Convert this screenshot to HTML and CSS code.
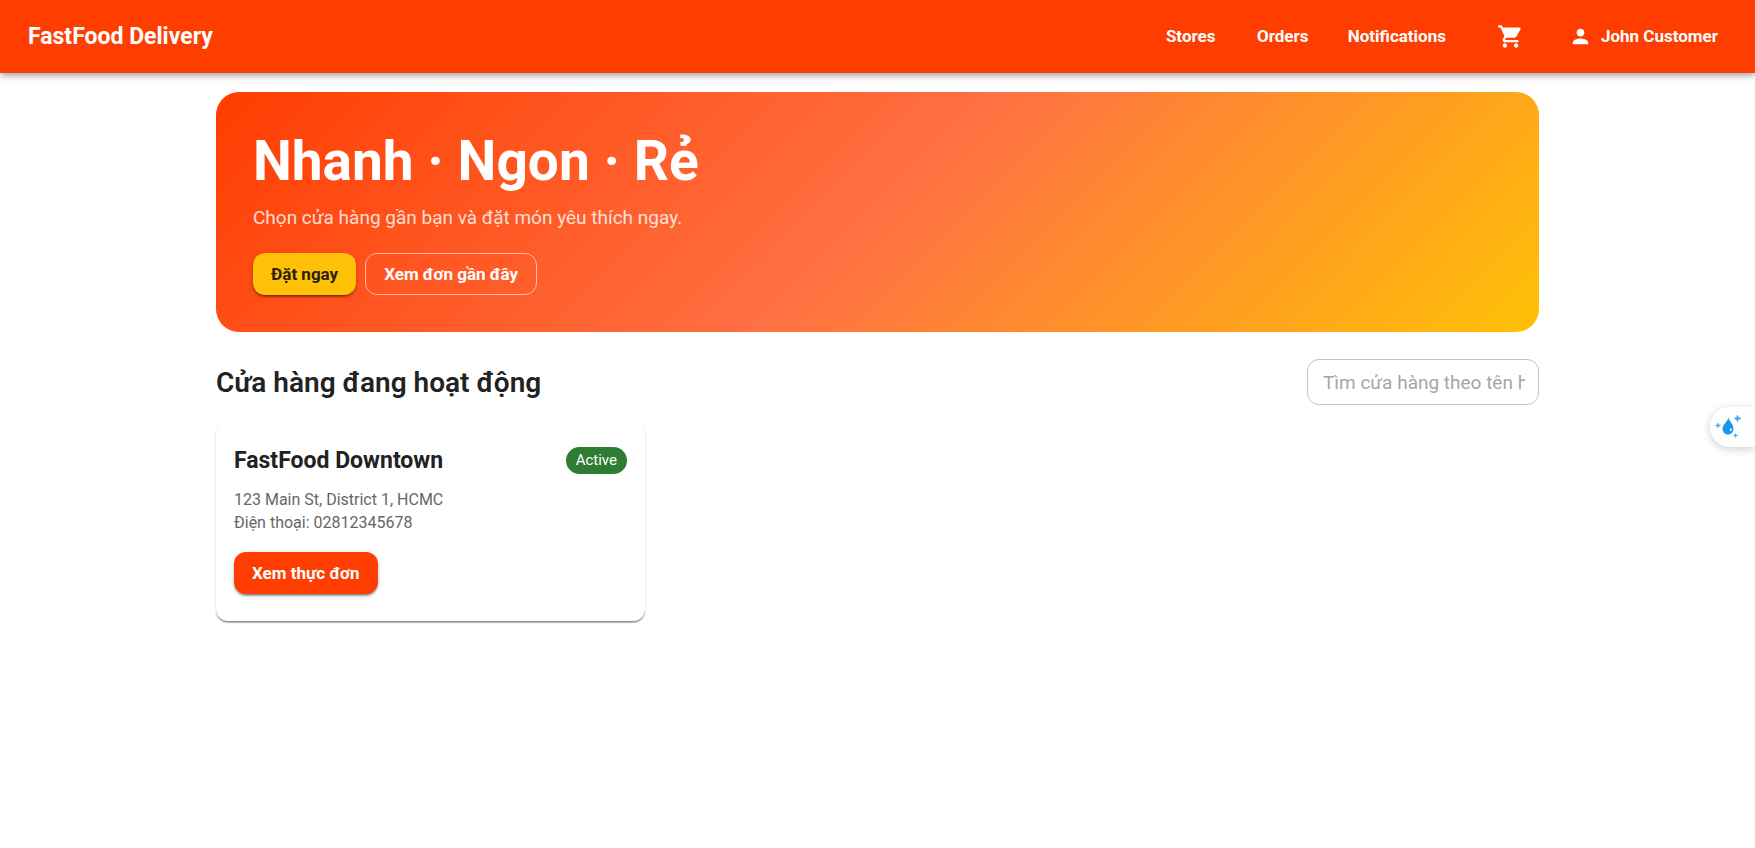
FILE: index.html
```html
<!DOCTYPE html>
<html lang="vi">
<head>
<meta charset="utf-8">
<meta name="viewport" content="width=device-width, initial-scale=1">
<title>FastFood Delivery</title>
<link rel="stylesheet" href="styles.css">
</head>
<body>
<header class="app-bar">
  <a class="brand" href="#">FastFood Delivery</a>
  <nav class="nav">
    <a class="nav-link" href="#stores">Stores</a>
    <a class="nav-link" href="#orders">Orders</a>
    <a class="nav-link" href="#notifications">Notifications</a>
    <button class="cart" type="button" aria-label="Cart">
      <svg class="cart-icon" viewBox="0 0 24 24"><path d="M7 18c-1.100 0-1.990.9-1.990 2S5.900 22 7 22s2-.9 2-2-.9-2-2-2zM1 2v2h2l3.600 7.590-1.350 2.450c-.16.28-.25.61-.25.96 0 1.100.9 2 2 2h12v-2H7.420c-.14 0-.25-.11-.25-.25l.03-.12.9-1.630h7.450c.75 0 1.410-.41 1.750-1.030l3.580-6.490c.08-.14.12-.31.12-.48 0-.55-.45-1-1-1H5.210l-.94-2H1zm16 16c-1.100 0-1.990.9-1.990 2s.89 2 1.990 2 2-.9 2-2-.9-2-2-2z"/></svg>
    </button>
    <button class="account" type="button">
      <svg class="account-icon" viewBox="0 0 24 24"><path d="M12 12c2.210 0 4-1.790 4-4s-1.790-4-4-4-4 1.790-4 4 1.790 4 4 4zm0 2c-2.670 0-8 1.340-8 4v2h16v-2c0-2.660-5.330-4-8-4z"/></svg>
      John Customer
    </button>
  </nav>
</header>
<main class="page">
  <section class="hero">
    <h1 class="hero-title">Nhanh · Ngon · Rẻ</h1>
    <p class="hero-text">Chọn cửa hàng gần bạn và đặt món yêu thích ngay.</p>
    <div class="hero-actions">
      <button class="btn btn-yellow" type="button">Đặt ngay</button>
      <button class="btn btn-outline" type="button">Xem đơn gần đây</button>
    </div>
  </section>
  <div class="section-head">
    <h2 class="section-title">Cửa hàng đang hoạt động</h2>
    <input class="search" type="text" aria-label="Tìm cửa hàng" placeholder="Tìm cửa hàng theo tên hoặc địa chỉ">
  </div>
  <div class="stores">
    <article class="card">
      <div class="card-head">
        <h3 class="card-title">FastFood Downtown</h3>
        <span class="chip">Active</span>
      </div>
      <p class="card-text">123 Main St, District 1, HCMC</p>
      <p class="card-text">Điện thoại: 02812345678</p>
      <button class="btn btn-primary" type="button">Xem thực đơn</button>
    </article>
  </div>
</main>
<button class="side-tab" type="button" aria-label="Assistant">
  <svg class="side-icon" viewBox="0 0 28 28"><path d="M14.500 4.500C15 8 19.500 11 19.500 16a5.500 5.500 0 0 1-11 0C8.500 11.500 13.500 9 14.500 4.500z" fill="#1c97ea"/><path d="M17 14.500q1.500 2-.5 4-1.200-2 .5-4z" fill="#fff"/><path d="M23.500 2l.9 2.600 2.600.9-2.600.9-.9 2.600-.9-2.600-2.600-.9 2.600-.9zM4 10l.7 1.800 1.800.7-1.800.7L4 15l-.7-1.800-1.800-.7 1.800-.7zM21.500 20.500l.5 1.500 1.500.5-1.500.5-.5 1.500-.5-1.500-1.500-.5 1.500-.5z" fill="#3ba7ee" stroke="#3ba7ee" stroke-width=".5"/></svg>
</button>
</body>
</html>
```
FILE: styles.css
```css
* { box-sizing: border-box; }
body {
  margin: 0;
  background: #fff;
  color: #222;
  font-family: Roboto, "Noto Sans", sans-serif;
  font-size: 16px;
  line-height: 23px;
}
h1, h2, h3, p { margin: 0; }
button, input { font: inherit; }
button { border: 0; cursor: pointer; }

.app-bar {
  display: flex;
  align-items: center;
  justify-content: space-between;
  min-height: 73px;
  padding: 0 28px;
  background: #ff3d00;
  color: #fff;
  box-shadow: 0 2px 5px -1px rgba(0, 0, 0, .2), 0 4px 6px rgba(0, 0, 0, .14), 0 1px 11px rgba(0, 0, 0, .12);
}
.brand { color: inherit; font-size: 23px; font-weight: 700; text-decoration: none; }
.nav { display: flex; align-items: center; gap: 18px; font-size: 17px; }
.nav-link { min-width: 74px; padding: 0 10px; color: inherit; font-weight: 700; text-align: center; text-decoration: none; }
.cart { display: flex; margin: 0 4px 0 9px; padding: 14px; background: none; color: inherit; }
.cart-icon { width: 27px; height: 27px; fill: currentColor; }
.account { display: flex; align-items: center; gap: 9px; padding: 7px 9px; background: none; color: inherit; font-weight: 700; }
.account-icon { width: 23px; height: 23px; fill: currentColor; }

.page { max-width: 1379px; margin: 0 auto; padding: 19px 28px; }
.hero {
  padding: 37px;
  border-radius: 23px;
  background: linear-gradient(135deg, #ff3d00 0%, #ff7043 50%, #ffc107 100%);
  color: #fff;
}
.hero-title { font-size: 55px; font-weight: 700; line-height: 64px; }
.hero-text { margin: 11px 0 22px; font-size: 19px; line-height: 27px; opacity: .8; }
.hero-actions { display: flex; gap: 9px; }

.btn { padding: 0 18px; border-radius: 12px; font-size: 17px; font-weight: 700; line-height: 42px; }
.btn-yellow, .btn-primary { box-shadow: 0 3px 2px -2px rgba(0, 0, 0, .3), 0 2px 2px rgba(0, 0, 0, .24), 0 1px 6px rgba(0, 0, 0, .12); }
.btn-yellow { background: #ffc107; color: #2b2108; }
.btn-outline { border: 1px solid rgba(255, 255, 255, .6); background: none; color: #fff; line-height: 40px; }
.btn-primary { margin-top: 18px; background: #ff3d00; color: #fff; }

.section-head { display: flex; align-items: center; justify-content: space-between; gap: 18px; margin: 27px 0 18px; }
.section-title { font-size: 28px; font-weight: 600; line-height: 37px; }
.search {
  width: 232px;
  height: 46px;
  padding: 0 13px 0 15px;
  border: 1px solid #c4c4c4;
  border-radius: 12px;
  background: transparent;
  color: #222;
  font-size: 19px;
}
.search::placeholder { color: #a6a6a6; opacity: 1; }

.stores { display: grid; grid-template-columns: repeat(3, 1fr); gap: 18px; }
.card {
  padding: 19px 18px 27px;
  border-radius: 12px;
  background: #fff;
  box-shadow: 0 2px 1px -1px rgba(0, 0, 0, .2), 0 2px 1px rgba(0, 0, 0, .24), 0 1px 3px rgba(0, 0, 0, .12);
}
.card-head { display: flex; align-items: center; justify-content: space-between; margin-bottom: 9px; }
.card-title { font-size: 23px; font-weight: 700; line-height: 37px; }
.chip { padding: 0 10px; border-radius: 14px; background: #2e7d32; color: #fff; font-size: 15px; line-height: 27px; }
.card-text { color: #666; }

.side-tab {
  position: fixed;
  top: 407px;
  right: 0;
  display: flex;
  padding: 6px 13px 6px 4px;
  border-radius: 20px 0 0 20px;
  background: #fff;
  box-shadow: 0 2px 9px rgba(0, 0, 0, .2);
}
.side-icon { width: 28px; height: 28px; }
```
